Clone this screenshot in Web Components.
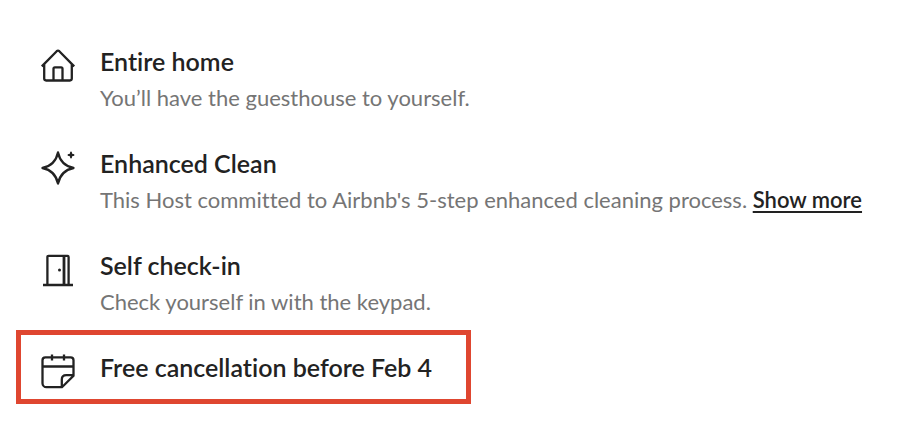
<!DOCTYPE html>
<html lang="en">
<head>
<meta charset="utf-8">
<title>Listing highlights</title>
<style>
body { margin: 0; background: #fff; }
</style>
</head>
<body>
<listing-highlights>
  <listing-feature icon="home"><span slot="title">Entire home</span><span>You’ll have the guesthouse to yourself.</span></listing-feature>
  <listing-feature icon="sparkle"><span slot="title">Enhanced Clean</span><span>This Host committed to Airbnb's 5-step enhanced cleaning process. <more-link>Show more</more-link></span></listing-feature>
  <listing-feature icon="door"><span slot="title">Self check-in</span><span>Check yourself in with the keypad.</span></listing-feature>
  <listing-feature icon="calendar" marked><span slot="title">Free cancellation before Feb 4</span></listing-feature>
</listing-highlights>
<script>
const icons = {
  home: '<path d="M1.800 18.400 16.700 3.200a1.900 1.900 0 0 1 2.600 0L34.200 18.400M4.200 16v14.600c0 1.100.8 1.900 1.900 1.900h23.800c1.100 0 1.900-.8 1.900-1.900V16M13.500 32V20.800c0-.8.6-1.400 1.400-1.400h6.200c.8 0 1.400.6 1.400 1.400V32"/>',
  sparkle: '<path stroke-linejoin="round" d="M18 2.500c1.800 8.500 7 13.700 15.500 15.500-8.500 1.800-13.700 7-15.500 15.500-1.800-8.500-7-13.700-15.500-15.500 8.500-1.800 13.700-7 15.500-15.500Z"/><path fill="currentColor" stroke="none" d="m31 1 1.300 2.700L35 5l-2.700 1.300L31 9l-1.300-2.700L27 5l2.700-1.300Z"/><path d="M31 2.200v5.600M28.200 5h5.600" stroke-width="1.800"/>',
  door: '<path d="M3 33h30M7.400 33V5c0-.7.4-1.200 1.200-1.200h18.800c.8 0 1.200.5 1.200 1.200v28"/><path stroke-width="2.800" d="M24 4v29"/><circle cx="19.500" cy="18" r="1.500" fill="currentColor" stroke="none"/>',
  calendar: '<path d="M22 33.200H6.500a4 4 0 0 1-4-4V6.200c0-1.900 1-2.900 2.900-2.900h25.200c1.900 0 2.900 1 2.900 2.900V21.700ZM2.500 12.500h31M12 .5v6M24 .5v6M21.800 33V25.500c0-3 1.500-4.400 4.500-4.400h7"/>'
};

customElements.define('feature-icon', class extends HTMLElement {
  connectedCallback() {
    this.attachShadow({ mode: 'open' }).innerHTML = `
      <style>
        :host { display: block; width: 36px; height: 36px; color: #222; }
        svg { display: block; width: 100%; height: 100%; overflow: visible; fill: none; stroke: currentColor; stroke-width: 2.300; }
      </style>
      <svg viewBox="0 0 36 36" aria-hidden="true">${icons[this.getAttribute('name')]}</svg>`;
  }
});

customElements.define('more-link', class extends HTMLElement {
  connectedCallback() {
    this.attachShadow({ mode: 'open' }).innerHTML = `
      <style>
        :host { display: inline; }
        a { color: #222; font-weight: 600; text-decoration: underline; text-decoration-thickness: 2px; text-underline-offset: 3px; text-decoration-skip-ink: none; }
      </style>
      <a href="#more"><slot></slot></a>`;
  }
});

customElements.define('listing-feature', class extends HTMLElement {
  connectedCallback() {
    this.attachShadow({ mode: 'open' }).innerHTML = `
      <style>
        :host { display: flex; gap: 24px; align-items: flex-start; padding: 0 24px; }
        :host([marked]) { width: fit-content; box-sizing: border-box; max-width: 100%; border: 5px solid #df4630; padding: 16px 34px 9px 19px; margin-top: -21px; }
        feature-icon { flex: none; margin-top: 3px; }
        h2 { margin: 0; font-size: 25px; line-height: 32px; font-weight: 600; color: #222; }
        .detail { font-size: 22px; line-height: 28px; color: #757575; margin-top: 7px; }
        :host([marked]) .detail { display: none; }
      </style>
      <feature-icon name="${this.getAttribute('icon')}"></feature-icon>
      <div><h2><slot name="title"></slot></h2><div class="detail"><slot></slot></div></div>`;
  }
});

customElements.define('listing-highlights', class extends HTMLElement {
  connectedCallback() {
    this.attachShadow({ mode: 'open' }).innerHTML = `
      <style>
        :host { display: flex; flex-direction: column; gap: 35px; padding: 45px 16px 24px; font-family: Lato, "Liberation Sans", sans-serif; font-variant-ligatures: none; }
      </style>
      <slot></slot>`;
  }
});
</script>
</body>
</html>
